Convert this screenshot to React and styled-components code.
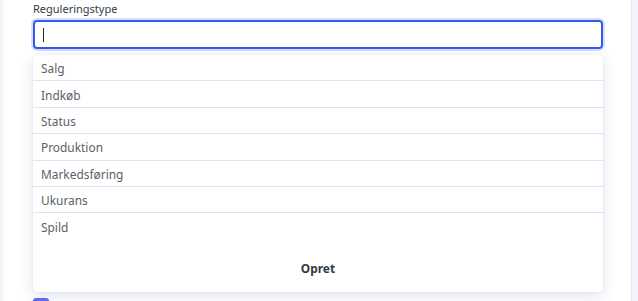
import React from 'react'
import styled, { createGlobalStyle } from 'styled-components'

let Global = createGlobalStyle`
    html, body {
        margin : 0;
        padding : 0;
        background : #f3f4f9;
        font-family : "Noto Sans", "Open Sans", sans-serif;
        overflow : hidden;
    }
`
let Panel = styled.div`
    margin-left : 3px;
    width : 629px;
    height : 301px;
    background : #ffffff;
    border-right : 1px solid #e6e7ef;
    box-sizing : border-box;
    padding : 0px 28px 0px 30px;
`
let Field = styled.div`
    position : relative;
    display : flex;
    flex-direction : column;
`
let Label = styled.label`
    font-size : 11px;
    line-height : 15px;
    color : #333a44;
    padding-top : 1px;
    margin-bottom : 4px;
`
let InputBox = styled.div`
    height : 29px;
    box-sizing : border-box;
    border : 2px solid #3558f2;
    border-radius : 4px;
    box-shadow : 0 0 0 2px rgba(53, 88, 242, 0.2);
    display : flex;
    align-items : center;
    padding-left : 8px;
`
let Caret = styled.span`
    width : 1px;
    height : 14px;
    background : #222;
`
let Menu = styled.ul`
    position : absolute;
    top : 55px;
    left : 0;
    right : 0;
    margin : 0;
    padding : 0;
    list-style : none;
    background : #ffffff;
    border-radius : 4px;
    box-shadow : 0 4px 14px rgba(70, 80, 170, 0.16), 0 0 2px rgba(70, 80, 170, 0.12);
    z-index : 2;
`
let Option = styled.li`
    height : 26.4px;
    box-sizing : border-box;
    display : flex;
    align-items : center;
    padding-left : 8px;
    padding-top : 1px;
    font-size : 11.9px;
    color : #5a5f66;
    border-bottom : ${p => p.last ? 'none' : '1px solid #dde1f2'};
`
let Create = styled.li`
    height : 52px;
    display : flex;
    align-items : center;
    justify-content : center;
    font-size : 11.9px;
    font-weight : 700;
    color : #333a44;
    padding-top : 5px;
    box-sizing : border-box;
`
let Below = styled.div`
    margin-top : 249px;
    display : flex;
`
let Check = styled.span`
    width : 16px;
    height : 16px;
    border-radius : 3px;
    background : #5b70ea;
`

let options = ["Salg", "Indkøb", "Status", "Produktion", "Markedsføring", "Ukurans", "Spild"]

function App() {
    return (
        <>
            <Global />
            <Panel>
                <Field>
                    <Label>Reguleringstype</Label>
                    <InputBox>
                        <Caret />
                    </InputBox>
                    <Menu>
                        {options.map((o, i) => (
                            <Option key={o} last={i === options.length - 1}>{o}</Option>
                        ))}
                        <Create>Opret</Create>
                    </Menu>
                    <Below>
                        <Check />
                    </Below>
                </Field>
            </Panel>
        </>
    )
}

export default App
